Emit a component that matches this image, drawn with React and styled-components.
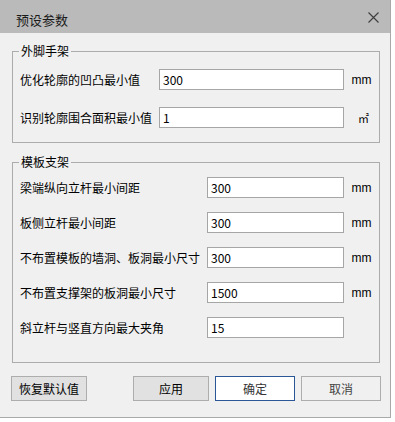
import React from "react";
import styled, { createGlobalStyle } from "styled-components";

const Global = createGlobalStyle`
  html, body { margin: 0; padding: 0; background: #ffffff; }
  body { font-family: "Noto Sans CJK SC", "Noto Sans", sans-serif; font-size: 12px; color: #000; }
  * { box-sizing: border-box; }
`;

const Window = styled.div`
  width: 391px;
  height: 418px;
  background: #f0f0f0;
  border-right: 1px solid #a9a9a9;
  border-bottom: 1px solid #a9a9a9;
  display: flex;
  flex-direction: column;
`;

const TitleBar = styled.div`
  height: 33px;
  flex: none;
  background: #bababa;
  display: flex;
  align-items: center;
  justify-content: space-between;
  padding: 5px 10px 0 16px;
`;

const Title = styled.span`
  font-size: 13px;
  line-height: 17px;
  color: #1a1a1a;
`;

const CloseButton = styled.button`
  width: 12px;
  height: 12px;
  padding: 0;
  margin-right: 1px;
  margin-top: -4px;
  border: none;
  background: transparent;
  display: flex;
  align-items: center;
  justify-content: center;
`;

const Body = styled.div`
  flex: 1;
  display: flex;
  flex-direction: column;
  padding: 18px 10px 16px 12px;
`;

const Group = styled.div`
  position: relative;
  border: 1px solid #acacac;
  padding: ${(p) => p.$pad};
  margin-top: ${(p) => p.$mt || 0}px;
  display: grid;
  grid-template-columns: ${(p) => p.$labelW}px ${(p) => p.$inputW}px 35px;
  row-gap: ${(p) => p.$gap}px;
  align-items: center;
`;

const Legend = styled.span`
  position: absolute;
  top: -9px;
  left: 6px;
  padding: 0 2px;
  background: #f0f0f0;
  font-size: 12px;
  line-height: 16px;
  color: #000;
`;

const Label = styled.label`
  font-size: 12px;
  line-height: 16px;
  white-space: nowrap;
  color: #000;
`;

const Input = styled.input`
  height: 21px;
  width: 100%;
  border: 1px solid #a6a6a6;
  background: #fff;
  padding: 0 3px;
  font-family: "Noto Sans CJK SC", "Noto Sans", sans-serif;
  font-size: 12px;
  color: #000;
  outline: none;
`;

const Unit = styled.span`
  font-family: ${(p) => (p.$small ? '"Noto Sans CJK SC", sans-serif' : '"Liberation Sans", Arial, sans-serif')};
  font-size: ${(p) => (p.$small ? 11 : 12)}px;
  line-height: 16px;
  text-align: center;
  padding-left: ${(p) => (p.$small ? 4 : 0)}px;
  color: #000;
`;

const Footer = styled.div`
  margin: 13px -1px 0 -1px;
  display: flex;
  justify-content: space-between;
`;

const ButtonGroup = styled.div`
  display: flex;
  gap: 6px;
`;

const Button = styled.button`
  width: ${(p) => p.$w}px;
  height: 25px;
  padding: 0;
  border: 1px solid ${(p) => (p.$primary ? "#2b5797" : "#adadad")};
  background: ${(p) => (p.$primary ? "#ffffff" : p.$flat ? "#f0f0f0" : "#e1e1e1")};
  font-family: "Noto Sans CJK SC", sans-serif;
  font-size: 12px;
  color: ${(p) => (p.$primary ? "#333" : p.$flat ? "#444" : "#000")};
`;

const outer = [
  { label: "优化轮廓的凹凸最小值", value: "300", unit: "mm" },
  { label: "识别轮廓围合面积最小值", value: "1", unit: "㎡", small: true },
];

const support = [
  { label: "梁端纵向立杆最小间距", value: "300", unit: "mm" },
  { label: "板侧立杆最小间距", value: "300", unit: "mm" },
  { label: "不布置模板的墙洞、板洞最小尺寸", value: "300", unit: "mm" },
  { label: "不布置支撑架的板洞最小尺寸", value: "1500", unit: "mm" },
  { label: "斜立杆与竖直方向最大夹角", value: "15", unit: "" },
];

function Rows({ rows }) {
  return rows.map((r) => (
    <React.Fragment key={r.label}>
      <Label>{r.label}</Label>
      <Input defaultValue={r.value} />
      <Unit $small={r.small}>{r.unit}</Unit>
    </React.Fragment>
  ));
}

export default function App() {
  return (
    <>
      <Global />
      <Window>
        <TitleBar>
          <Title>预设参数</Title>
          <CloseButton aria-label="关闭">
            <svg width="11" height="11" viewBox="0 0 11 11">
              <path d="M0.5 0.5 L10.5 10.5 M10.5 0.5 L0.5 10.5" stroke="#3c3c3c" strokeWidth="1.1" fill="none" />
            </svg>
          </CloseButton>
        </TitleBar>
        <Body>
          <Group $pad="17px 0 14px 7px" $labelW={139} $inputW={185} $gap={17}>
            <Legend>外脚手架</Legend>
            <Rows rows={outer} />
          </Group>
          <Group $mt={19} $pad="14px 0 24px 7px" $labelW={187} $inputW={137} $gap={14}>
            <Legend>模板支架</Legend>
            <Rows rows={support} />
          </Group>
          <Footer>
            <Button $w={76}>恢复默认值</Button>
            <ButtonGroup>
              <Button $w={76}>应用</Button>
              <Button $w={80} $primary>确定</Button>
              <Button $w={80} $flat>取消</Button>
            </ButtonGroup>
          </Footer>
        </Body>
      </Window>
    </>
  );
}
